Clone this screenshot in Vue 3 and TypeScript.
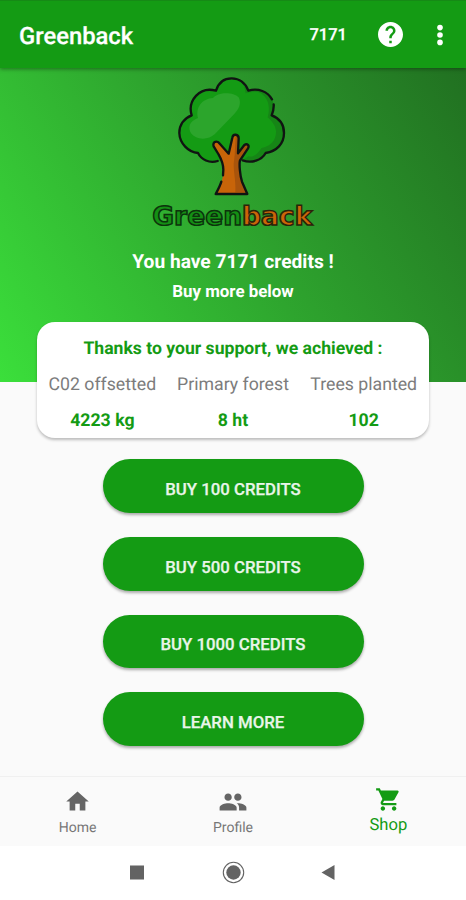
<script setup lang="ts">
interface Stat {
  label: string
  value: string
}

const credits = 7171

const stats: Stat[] = [
  { label: 'C02 offsetted', value: '4223 kg' },
  { label: 'Primary forest', value: '8 ht' },
  { label: 'Trees planted', value: '102' },
]

const actions: string[] = ['Buy 100 credits', 'Buy 500 credits', 'Buy 1000 credits', 'Learn more']
</script>

<template>
  <div class="screen">
    <header class="app-bar">
      <h1 class="title">Greenback</h1>
      <span class="balance">{{ credits }}</span>
      <svg class="help" viewBox="2 2 20 20">
        <path fill="#fff" d="M12 2C6.48 2 2 6.48 2 12s4.48 10 10 10 10-4.48 10-10S17.52 2 12 2zm1 17h-2v-2h2v2zm2.07-7.75l-.9.92C13.45 12.9 13 13.5 13 15h-2v-.5c0-1.1.45-2.1 1.17-2.83l1.24-1.26c.37-.36.59-.86.59-1.41 0-1.1-.9-2-2-2s-2 .9-2 2H8c0-2.21 1.79-4 4-4s4 1.79 4 4c0 .88-.36 1.68-.93 2.25z" />
      </svg>
      <svg class="more" viewBox="0 0 8 22">
        <circle cx="4" cy="3.6" r="2.8" fill="#fff" />
        <circle cx="4" cy="11" r="2.8" fill="#fff" />
        <circle cx="4" cy="18.4" r="2.8" fill="#fff" />
      </svg>
    </header>

    <section class="hero">
      <svg class="logo" viewBox="0 9 570 516">
        <path class="leaf" d="M233 288C208 296 184 284 174 264C145 262 119 235 118 204C118 180 132 160 155 151C142 108 178 63 228 77C235 54 252 40 275 40C298 40 317 54 325 77C365 65 403 90 403 130L395 151C419 160 432 180 432 204C432 236 410 259 377 264C365 286 335 296 308 286Z" />
        <path class="leaf-shade" d="M300 45C315 53 322 64 325 77C366 65 402 91 402 130L395 151C419 160 432 180 432 204C432 236 410 259 377 264C365 286 335 296 308 286L325 274C345 279 356 260 365 249C392 245 410 225 408 197C406 181 396 169 383 157C392 125 384 98 362 84C346 77 329 82 317 85C315 67 308 54 300 45Z" />
        <path class="leaf-light" d="M174 159C166 127 186 101 219 99C232 80 281 80 296 97C305 115 297 133 282 148L224 208C210 220 187 226 167 216C146 207 142 180 158 168C163 164 169 161 174 159Z" />
        <path class="outline" d="M233 288C208 296 184 284 174 264C145 262 119 235 118 204C118 180 132 160 155 151C142 108 178 63 228 77C235 54 252 40 275 40C298 40 317 54 325 77C355 68 383 80 396 103M401 118C402 130 399 141 395 151C419 160 432 180 432 204C432 236 410 259 377 264C365 286 335 296 308 286" />
        <path class="trunk" d="M227 387C242 364 249 346 250 314C250 293 243 281 235 267L221 244C216 230 232 225 240 237L266 266L277 218C279 205 296 207 296 220L294 265L313 240C322 234 329 242 324 250L300 286C297 297 300 332 306 350L322 387Z" />
        <path class="trunk-shade" d="M287 214C294 213 295 220 294 226L293 270L315 240C323 239 325 245 321 250L299 284C296 297 299 331 305 351L317 382L286 382C288 351 281 325 281 296L284 271Z" />
        <path class="outline" d="M244 350C240 364 233 376 227 387H322L306 350C300 332 297 297 300 286L324 250C329 242 322 234 313 240L294 265L296 220C296 207 279 205 277 218L266 266L240 237C232 225 216 230 221 244L235 267C243 281 250 293 250 314L249 331" />
        <text class="wordmark" x="37" y="480" textLength="480" lengthAdjust="spacingAndGlyphs"><tspan class="green">Green</tspan><tspan class="brown">back</tspan></text>
      </svg>
      <p class="credits">You have {{ credits }} credits !</p>
      <p class="hint">Buy more below</p>
    </section>

    <section class="card">
      <h2 class="card-title">Thanks to your support, we achieved :</h2>
      <div class="stats">
        <div v-for="s in stats" :key="s.label" class="stat">
          <span class="label">{{ s.label }}</span>
          <span class="value">{{ s.value }}</span>
        </div>
      </div>
    </section>

    <main class="actions">
      <button v-for="a in actions" :key="a" class="action" type="button">{{ a }}</button>
    </main>

    <nav class="tabs">
      <div class="tab">
        <svg class="tab-icon" viewBox="0 0 24 24"><path d="M10 20v-6h4v6h5v-8h3L12 3 2 12h3v8z" /></svg>
        <span>Home</span>
      </div>
      <div class="tab">
        <svg class="tab-icon people" viewBox="0.5 0.5 23 23"><path d="M16 11c1.66 0 2.99-1.34 2.99-3S17.66 5 16 5s-3 1.34-3 3 1.34 3 3 3zm-8 0c1.66 0 2.99-1.34 2.99-3S9.66 5 8 5 5 6.34 5 8s1.34 3 3 3zm0 2c-2.33 0-7 1.17-7 3.5V19h14v-2.500C15 14.170 10.330 13 8 13zm8 0c-.29 0-.62.02-.97.05 1.160.84 1.970 1.970 1.970 3.450V19h6v-2.500c0-2.330-4.670-3.500-7-3.500z" /></svg>
        <span>Profile</span>
      </div>
      <div class="tab active">
        <svg class="tab-icon" viewBox="0 0 24 24"><path d="M7 18c-1.100 0-1.990.9-1.990 2S5.900 22 7 22s2-.9 2-2-.9-2-2-2zM1 2v2h2l3.600 7.590-1.350 2.450c-.16.28-.25.61-.25.96 0 1.100.9 2 2 2h12v-2H7.420c-.14 0-.25-.11-.25-.25l.03-.12.9-1.630h7.450c.75 0 1.410-.41 1.750-1.030l3.580-6.490A1 1 0 0 0 20 4H5.210l-.94-2H1zm16 16c-1.100 0-1.990.9-1.990 2s.89 2 1.990 2 2-.9 2-2-.9-2-2-2z" /></svg>
        <span>Shop</span>
      </div>
    </nav>

    <footer class="system-bar">
      <svg class="sys" viewBox="0 0 24 24"><rect x="5" y="4.5" width="14" height="14" fill="#636363" /></svg>
      <svg class="sys" viewBox="0 0 24 24">
        <circle cx="12.500" cy="11.500" r="10.200" fill="none" stroke="#636363" stroke-width="1.1" />
        <circle cx="12.500" cy="11.500" r="7.200" fill="#636363" />
      </svg>
      <svg class="sys" viewBox="0 0 24 24"><path d="M4.500 11.500L17.500 4V19Z" fill="#636363" /></svg>
    </footer>
  </div>
</template>

<style>
body {
  margin: 0;
}
</style>

<style scoped>
.screen {
  display: flex;
  flex-direction: column;
  width: 466px;
  height: 900px;
  overflow: hidden;
  background: #fafafa;
  font-family: Roboto, "Liberation Sans", sans-serif;
  text-rendering: geometricPrecision;
}

h1,
h2,
p {
  margin: 0;
}

.app-bar {
  display: flex;
  align-items: center;
  flex: none;
  box-sizing: border-box;
  height: 68px;
  padding: 0 22px 0 19px;
  background: #149b14;
  border-top: 1px solid #168a16;
  box-shadow: 0 1px 4px rgba(0, 0, 0, 0.4);
  color: #fff;
  z-index: 1;
}

.title {
  flex: 1;
  padding-top: 2px;
  font-size: 23.8px;
  line-height: 30px;
  font-weight: 500;
  -webkit-text-stroke: 0.25px #fff;
}

.balance {
  padding-top: 2px;
  font-size: 16.5px;
  font-weight: 500;
  -webkit-text-stroke: 0.25px #fff;
}

.help {
  width: 25px;
  height: 25px;
  margin-left: 31px;
}

.more {
  width: 8px;
  height: 22px;
  margin-left: 33px;
}

.hero {
  display: flex;
  flex-direction: column;
  align-items: center;
  flex: none;
  height: 314px;
  background: linear-gradient(57deg, #3bdf3b 0%, #2ea52e 50%, #217021 100%);
  color: #fff;
}

.logo {
  flex: none;
  width: 190px;
  height: 172px;
  margin-left: 4px;
}

.leaf {
  fill: #149b14;
}

.leaf-shade {
  fill: #168516;
}

.leaf-light {
  fill: #2ca52c;
}

.trunk {
  fill: #c86409;
}

.trunk-shade {
  fill: #a9540c;
}

.outline {
  fill: none;
  stroke: #101412;
  stroke-width: 7;
  stroke-linecap: round;
  stroke-linejoin: round;
}

.wordmark {
  font-family: "DejaVu Sans", sans-serif;
  font-size: 78px;
  font-weight: 700;
  stroke: #0c330c;
  stroke-width: 4.5;
}

.green {
  fill: #149014;
}

.brown {
  fill: #cc6508;
  stroke: #2a240a;
}

.credits {
  margin-top: 9px;
  font-size: 19.2px;
  line-height: 26px;
  font-weight: 700;
}

.hint {
  margin-top: 5px;
  font-size: 16.9px;
  line-height: 24px;
  font-weight: 700;
}

.card {
  flex: none;
  box-sizing: border-box;
  width: 392px;
  height: 116px;
  margin: -60px auto 0 37px;
  padding-top: 15px;
  border-radius: 18px;
  background: #fff;
  box-shadow: 0 2px 3px rgba(0, 0, 0, 0.25);
  text-align: center;
}

.card-title {
  font-size: 17.6px;
  line-height: 24px;
  font-weight: 700;
  color: #149b14;
}

.stats {
  display: grid;
  grid-template-columns: repeat(3, 1fr);
  margin-top: 12px;
}

.stat {
  display: flex;
  flex-direction: column;
  gap: 12px;
  line-height: 24px;
  font-size: 17.7px;
}

.label {
  color: #7c7c7c;
  white-space: nowrap;
}

.value {
  color: #149b14;
  font-weight: 700;
}

.actions {
  display: flex;
  flex-direction: column;
  align-items: center;
  flex: 1;
  gap: 24px;
  padding-top: 21px;
}

.action {
  flex: none;
  width: 261px;
  height: 53.8px;
  padding: 6px 0 0;
  border: 0;
  border-radius: 27px;
  background: #149b14;
  box-shadow: 0 2px 3px rgba(0, 0, 0, 0.32);
  color: #e9f5e9;
  font: 500 16.8px/24px Roboto, "Liberation Sans", sans-serif;
  -webkit-text-stroke: 0.25px #e9f5e9;
  text-transform: uppercase;
}

.tabs {
  display: grid;
  grid-template-columns: repeat(3, 1fr);
  flex: none;
  box-sizing: border-box;
  height: 70px;
  border-top: 1px solid #f0f0f0;
  background: #fafafa;
}

.tab {
  display: flex;
  flex-direction: column;
  align-items: center;
  padding-top: 11px;
  color: #777;
  fill: #656565;
  font-size: 14px;
  line-height: 20px;
}

.tab-icon {
  width: 27px;
  height: 27px;
  margin-bottom: 3px;
}

.tab-icon.people {
  width: 28px;
  height: 28px;
  margin-bottom: 2px;
}

.tab.active {
  padding-top: 9px;
  color: #149b14;
  fill: #149b14;
  font-size: 16.6px;
}

.system-bar {
  display: flex;
  justify-content: center;
  align-items: center;
  flex: none;
  gap: 72px;
  height: 54px;
  background: #fff;
}

.sys {
  width: 24px;
  height: 24px;
}
</style>
